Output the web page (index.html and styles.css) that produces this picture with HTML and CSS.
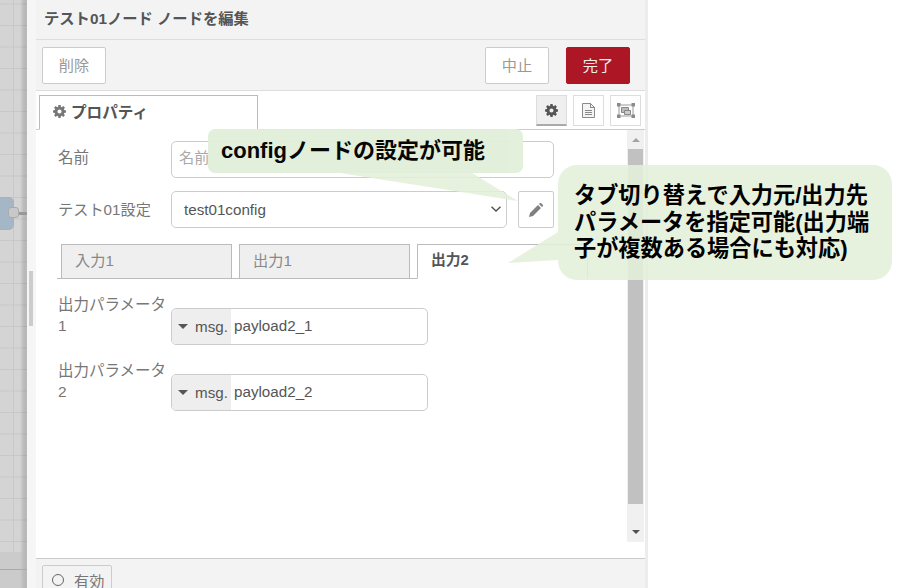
FILE: index.html
```
<!DOCTYPE html>
<html lang="ja">
<head>
<meta charset="utf-8">
<title>テスト01ノード ノードを編集</title>
<link rel="stylesheet" href="styles.css">
</head>
<body>
<div class="app">
  <div class="canvas">
    <div class="node"></div>
    <div class="port"></div>
    <div class="wire"></div>
    <div class="canvas-bottom"></div>
  </div>
  <div class="sash"><div class="sash-grip"></div></div>
  <main class="tray">
    <header class="tray-title">テスト01ノード ノードを編集</header>
    <div class="toolbar">
      <button class="btn btn-delete">削除</button>
      <div class="toolbar-right">
        <button class="btn btn-cancel">中止</button>
        <button class="btn btn-done">完了</button>
      </div>
    </div>
    <div class="tabbar">
      <div class="main-tab">
        <svg class="gear" viewBox="0 0 14 14"><path fill="#777" fill-rule="evenodd" d="M5.800 0h2.400l.3 1.900 1 .4 1.600-1.100 1.700 1.700-1.100 1.600.4 1 1.900.3v2.400l-1.900.3-.4 1 1.100 1.600-1.700 1.700-1.600-1.100-1 .4-.3 1.900H5.800l-.3-1.900-1-.4-1.600 1.100-1.700-1.700 1.100-1.600-.4-1L0 8.200V5.800l1.900-.3.4-1-1.100-1.600 1.700-1.700 1.600 1.100 1-.4zM7 4.800a2.200 2.200 0 1 0 0 4.400 2.200 2.200 0 0 0 0-4.400z"/></svg>
        <span>プロパティ</span>
      </div>
      <div class="tab-icons">
        <div class="tab-icon active">
          <svg class="gear" viewBox="0 0 14 14"><path fill="#555" fill-rule="evenodd" d="M5.800 0h2.400l.3 1.900 1 .4 1.600-1.100 1.700 1.700-1.100 1.600.4 1 1.900.3v2.400l-1.900.3-.4 1 1.100 1.600-1.700 1.700-1.600-1.100-1 .4-.3 1.900H5.800l-.3-1.900-1-.4-1.600 1.100-1.700-1.700 1.100-1.600-.4-1L0 8.200V5.800l1.900-.3.4-1-1.100-1.600 1.700-1.700 1.600 1.100 1-.4zM7 4.800a2.200 2.200 0 1 0 0 4.400 2.200 2.200 0 0 0 0-4.400z"/></svg>
        </div>
        <div class="tab-icon">
          <svg width="13" height="15" viewBox="0 0 13 15"><path fill="#f4f4f4" stroke="#8a8a8a" d="M.5.500h8l4 4v10H.5z"/><path fill="#8a8a8a" d="M8 0h1v4h4v1H8zM3 7h7v1H3zM3 9h7v1H3zM3 11h7v1H3z"/></svg>
        </div>
        <div class="tab-icon">
          <svg width="18" height="15" viewBox="0 0 18 15"><path fill="none" stroke="#999" d="M2 2h14v11H2z"/><path fill="#bbb" stroke="#888" d="M4.500 4.500h7v5h-7z"/><path fill="#ccc" stroke="#888" d="M7.500 7.500h6v4h-6z"/><path fill="#8a8a8a" d="M0 0h3.500v3.500H0zM14.500 0H18v3.500h-3.500zM0 11.500h3.500V15H0zM14.500 11.500H18V15h-3.500z"/></svg>
        </div>
      </div>
    </div>
    <div class="body-wrap">
      <form class="form">
        <div class="row row-name">
          <label class="row-label label-name">名前</label>
          <div class="field">名前</div>
        </div>
        <div class="row row-config">
          <label class="row-label label-config">テスト01設定</label>
          <div class="select">
            <span>test01config</span>
            <svg width="10" height="6" viewBox="0 0 10 6"><path fill="none" stroke="#555" stroke-width="1.500" d="M.5.700L5 5 9.500.7"/></svg>
          </div>
          <div class="edit-btn">
            <svg width="14" height="14" viewBox="0 0 14 14"><path fill="#808080" d="M0 14l1-4 8-8 3 3-8 8zM10 1l1-1q.5-.3 1 0l2 2q.3.500 0 1l-1 1z"/></svg>
          </div>
        </div>
        <div class="subtabs">
          <div class="subtab">入力1</div>
          <div class="subtab">出力1</div>
          <div class="subtab current">出力2</div>
        </div>
        <div class="row row-param">
          <label class="row-label param-label">出力パラメータ<br>1</label>
          <div class="typed">
            <div class="typed-type"><i class="caret"></i>msg.</div>
            <div class="typed-value">payload2_1</div>
          </div>
        </div>
        <div class="row row-param">
          <label class="row-label param-label">出力パラメータ<br>2</label>
          <div class="typed">
            <div class="typed-type"><i class="caret"></i>msg.</div>
            <div class="typed-value">payload2_2</div>
          </div>
        </div>
      </form>
      <div class="scrollbar">
        <i class="arrow-up"></i>
        <div class="thumb"></div>
        <i class="arrow-down"></i>
      </div>
    </div>
    <footer class="tray-footer">
      <div class="enable-btn"><i class="ring"></i>有効</div>
    </footer>
  </main>
  <div class="edge"></div>
</div>
<svg class="tails" viewBox="0 0 897 588" width="897" height="588">
  <path class="tail" d="M340 173H472L518 201z"/>
  <path class="tail" d="M558 232L508 263L558 260z"/>
</svg>
<div class="callout callout-a">configノードの設定が可能</div>
<div class="callout callout-b">タブ切り替えで入力元/出力先<br>パラメータを指定可能(出力端<br>子が複数ある場合にも対応)</div>
</body>
</html>
```
FILE: styles.css
```
* { box-sizing: border-box; }
html, body { margin: 0; padding: 0; }
body {
  width: 897px;
  height: 588px;
  overflow: hidden;
  background: #fff;
  position: relative;
  font-family: "Liberation Sans", "Noto Sans CJK JP", sans-serif;
  font-size: 15.2px;
  color: #555;
}
.app { display: flex; height: 588px; }

.canvas {
  width: 27px;
  flex: none;
  position: relative;
  background-color: #d4d4d4;
  background-image:
    linear-gradient(to right, rgba(0,0,0,0) 20px, rgba(0,0,0,.13) 24px, rgba(0,0,0,.13) 27px),
    linear-gradient(to right, #c8c8c8 1px, transparent 1px),
    linear-gradient(to bottom, #c8c8c8 1px, transparent 1px);
  background-size: 100% 100%, 21.5px 21.5px, 21.5px 21.5px;
  background-position: 0 0, 13px 0, 0 3.5px;
}
.canvas-bottom {
  position: absolute;
  left: 0;
  right: 0;
  top: 552px;
  bottom: 0;
  background: linear-gradient(to bottom, transparent 17px, #aaa 17px, #aaa 18px, transparent 18px),
    linear-gradient(to right, #cbcbcb 20px, #b9b9b9 24px);
}
.node {
  position: absolute;
  left: -8px;
  top: 197px;
  width: 22px;
  height: 33px;
  background: #a5b6c6;
  border: 1px solid #b0b0b0;
  border-radius: 5px;
}
.port {
  position: absolute;
  left: 8px;
  top: 207px;
  width: 11px;
  height: 11px;
  background: #c8c8c8;
  border: 1px solid #aaa;
  border-radius: 3px;
}
.wire {
  position: absolute;
  left: 19px;
  top: 212px;
  width: 8px;
  height: 3px;
  background: #999;
}
.sash {
  width: 9px;
  flex: none;
  background: #f6f6f6;
  position: relative;
}
.sash-grip {
  position: absolute;
  left: 2px;
  top: 271px;
  width: 4px;
  height: 55px;
  background: #ccc;
}

.tray {
  width: 609px;
  flex: none;
  display: flex;
  flex-direction: column;
  background: #fff;
}
.edge { width: 3px; flex: none; background: #ececec; }

.tray-title {
  height: 40px;
  flex: none;
  background: #f3f3f3;
  border-bottom: 1px solid #ddd;
  padding: 10px 0 0 8px;
  font-weight: bold;
  font-size: 15.3px;
  line-height: 18px;
  color: #555;
}
.toolbar {
  height: 51px;
  flex: none;
  background: #f3f3f3;
  border-bottom: 1px solid #ddd;
  display: flex;
  justify-content: space-between;
  padding: 7px 15px 0 6px;
}
.toolbar-right { display: flex; gap: 17px; }
.btn {
  font: inherit;
  width: 64px;
  height: 37px;
  background: #fff;
  color: #999;
  border: 1px solid #ccc;
  border-radius: 2px;
  padding: 0 0 3px;
}
.btn-done { background: #ad1625; border-color: #ad1625; color: #eee; }

.tabbar {
  height: 39px;
  flex: none;
  border-bottom: 1px solid #ccc;
  display: flex;
  justify-content: space-between;
  padding: 4px 4px 0 3px;
}
.main-tab {
  width: 219px;
  height: 35px;
  background: #fff;
  border: 1px solid #bbb;
  border-bottom: 1px solid #fff;
  display: flex;
  align-items: center;
  gap: 5px;
  padding: 0 0 3px 13px;
  font-weight: bold;
  font-size: 15.6px;
  color: #555;
}
.gear { width: 13px; height: 13px; display: block; }
.tab-icons { display: flex; gap: 6px; }
.tab-icon {
  width: 31px;
  height: 31px;
  border: 1px solid #ddd;
  display: flex;
  align-items: center;
  justify-content: center;
  background: #fff;
}
.tab-icon.active { background: #efefef; border-bottom: 2px solid #aaa; }

.body-wrap { flex: 1; display: flex; min-height: 0; }
.form { flex: 1; padding: 11px 0 0 22px; }
.row { display: flex; align-items: flex-start; }
.row-label { width: 113px; flex: none; color: #777; font-size: 15.5px; }
.label-name { padding-bottom: 7px; }
.label-config { padding-bottom: 3px; font-size: 15.2px; }
.row-name { height: 37px; align-items: center; margin-bottom: 13px; }
.field {
  width: 383px;
  height: 37px;
  border: 1px solid #ccc;
  border-radius: 5px;
  color: #aaa;
  padding: 0 7px;
  line-height: 31px;
}
.row-config { height: 37px; align-items: center; margin-bottom: 16px; }
.select {
  width: 336px;
  height: 37px;
  border: 1px solid #ccc;
  border-radius: 5px;
  padding: 0 5px 1px 12px;
  display: flex;
  align-items: center;
  justify-content: space-between;
  color: #555;
}
.edit-btn {
  width: 36px;
  height: 37px;
  margin-left: 11px;
  border: 1px solid #ccc;
  border-radius: 2px;
  display: flex;
  align-items: center;
  justify-content: center;
}
.subtabs {
  display: flex;
  gap: 7px;
  width: 531px;
  height: 35px;
  margin-left: -1px;
  padding-left: 4px;
  border-bottom: 1px solid #bbb;
  margin-bottom: 13px;
}
.subtab {
  width: 171px;
  height: 35px;
  background: #efefef;
  border: 1px solid #bbb;
  padding: 0 13px;
  line-height: 31px;
  color: #888;
}
.subtab.current {
  background: #fff;
  border-bottom-color: #fff;
  font-weight: bold;
  font-size: 14.8px;
  color: #555;
}
.row-param { height: 66px; }
.param-label { line-height: 21px; padding-top: 2px; }
.typed {
  width: 257px;
  height: 37px;
  margin-top: 16px;
  border: 1px solid #ccc;
  border-radius: 5px;
  overflow: hidden;
  display: flex;
  line-height: 34px;
}
.typed-type {
  width: 59px;
  flex: none;
  background: #eee;
  color: #555;
  display: flex;
  align-items: center;
  padding-left: 6px;
}
.caret {
  width: 0;
  height: 0;
  border-left: 5px solid transparent;
  border-right: 5px solid transparent;
  border-top: 5px solid #555;
  margin-right: 7px;
}
.typed-value { padding-left: 3px; color: #555; }

.scrollbar {
  width: 17px;
  flex: none;
  height: 412px;
  margin-right: 1px;
  background: #f0f0f0;
  display: flex;
  flex-direction: column;
  align-items: center;
}
.arrow-up, .arrow-down {
  width: 0;
  height: 0;
  border-left: 4px solid transparent;
  border-right: 4px solid transparent;
}
.arrow-up { border-bottom: 4px solid #a3a3a3; margin: 8px 0 7px; }
.arrow-down { border-top: 4px solid #505050; margin-top: 26px; }
.thumb { width: 15px; height: 355px; background: #c1c1c1; flex: none; }

.tray-footer {
  height: 30px;
  flex: none;
  background: #f3f3f3;
  border-top: 1px solid #ccc;
  padding: 6px 0 0 6px;
}
.enable-btn {
  width: 70px;
  height: 37px;
  border: 1px solid #ccc;
  border-radius: 2px;
  display: flex;
  align-items: center;
  padding: 0 0 8px 9px;
  gap: 10px;
  color: #777;
}
.ring {
  width: 12px;
  height: 12px;
  border: 1.5px solid #666;
  border-radius: 50%;
}

.tails { position: absolute; left: 0; top: 0; pointer-events: none; }
.tail { fill: #e2efda; fill-opacity: .88; }
.callout {
  position: absolute;
  background: #e2efda;
  color: #000;
  font-weight: bold;
  font-size: 22px;
}
.callout-a {
  left: 208px;
  top: 129px;
  width: 315px;
  height: 44px;
  border-radius: 7px;
  padding: 7px 0 0 13px;
  line-height: 30px;
  opacity: .97;
}
.callout-b {
  left: 558px;
  top: 165px;
  width: 334px;
  height: 115px;
  border-radius: 19px;
  padding: 18px 0 0 16px;
  font-size: 22.2px;
  line-height: 26.5px;
  background: rgba(226,239,218,.88);
}
```
